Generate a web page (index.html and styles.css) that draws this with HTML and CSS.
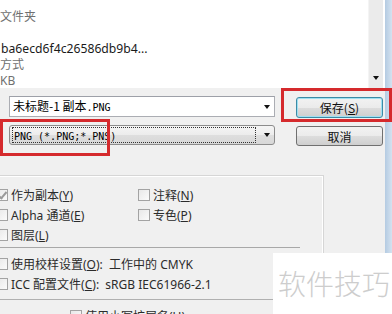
FILE: index.html
```html
<!DOCTYPE html>
<html lang="zh-CN">
<head>
    <meta charset="UTF-8">
    <title>存储为</title>
    <link rel="stylesheet" href="styles.css">
</head>
<body>
    <div class="window">
        <div class="dialog">
            <!-- 文件列表 -->
            <div class="file-list">
                <div class="list-items">
                    <div class="list-line muted">文件夹</div>
                    <div class="list-line name">ba6ecd6f4c26586db9b4...</div>
                    <div class="list-line muted">方式</div>
                    <div class="list-line muted">KB</div>
                </div>
                <div class="scrollbar"><span class="arrow-down"></span></div>
            </div>

            <!-- 文件名 / 格式 -->
            <div class="save-rows">
                <div class="combo combo-edit">
                    <span class="combo-text">未标题-1 副本<span class="mono">.PNG</span></span>
                    <span class="arrow-down"></span>
                </div>
                <button class="btn btn-default">保存(<u>S</u>)</button>
                <div class="combo combo-list">
                    <span class="combo-text focus"><span class="mono">PNG (*.PNG;*.PNS)</span></span>
                    <span class="arrow-down"></span>
                </div>
                <button class="btn btn-cancel">取消</button>
            </div>

            <!-- 存储选项 -->
            <div class="options">
                <div class="check-grid">
                    <label class="check"><span class="box checked"></span>作为副本(<u>Y</u>)</label>
                    <label class="check"><span class="box"></span>注释(<u>N</u>)</label>
                    <label class="check"><span class="box"></span>Alpha 通道(<u>E</u>)</label>
                    <label class="check"><span class="box"></span>专色(<u>P</u>)</label>
                    <label class="check"><span class="box"></span>图层(<u>L</u>)</label>
                </div>
                <div class="sep"></div>
                <div class="color-rows">
                    <label class="check"><span class="box"></span>使用校样设置(<u>O</u>):&nbsp;&nbsp;工作中的 CMYK</label>
                    <label class="check"><span class="box"></span>ICC 配置文件(<u>C</u>):&nbsp;&nbsp;sRGB IEC61966-2.1</label>
                </div>
                <div class="sep sep-bottom"></div>
                <label class="check check-last"><span class="box"></span>使用小写扩展名(<u>U</u>)</label>
            </div>
        </div>
        <div class="frame"></div>
    </div>

    <!-- 标注框 -->
    <div class="mark mark-save"></div>
    <div class="mark mark-format"></div>

    <div class="watermark">软件技巧</div>
</body>
</html>
```

FILE: styles.css
```css
/* 基础重置 */
* {
    margin: 0;
    padding: 0;
    box-sizing: border-box;
}

html, body {
    width: 100%;
    height: 100%;
    overflow: hidden;
}

body {
    font-family: "Noto Sans", "Noto Sans CJK SC", sans-serif;
    font-size: 12px;
    color: #222;
    background: #f0f0f0;
    position: relative;
}

.window {
    display: flex;
    height: 100%;
}

.dialog {
    width: 385px;
    display: flex;
    flex-direction: column;
}

/* 窗口右边框 */
.frame {
    width: 7px;
    background: linear-gradient(to right, #b4cbe2, #d4e2f0);
}

/* 文件列表 */
.file-list {
    height: 88px;
    flex: none;
    background: #fff;
    display: flex;
}

.list-items {
    flex: 1;
    padding-top: 9px;
}

.list-line {
    height: 16px;
    line-height: 16px;
    white-space: nowrap;
}

.list-line.name {
    margin-top: 16px;
    color: #1a1a1a;
    padding-left: 1px;
    font-size: 12.2px;
}

.muted {
    color: #707070;
}

.scrollbar {
    width: 15px;
    margin-right: 2px;
    background: #ebebeb;
    border-left: 1px solid #f4f4f4;
    display: flex;
    justify-content: center;
    align-items: flex-end;
    padding-bottom: 8px;
}

.arrow-down {
    width: 0;
    height: 0;
    border-left: 3.5px solid transparent;
    border-right: 3.5px solid transparent;
    border-top: 4px solid #111;
}

/* 文件名和格式 */
.save-rows {
    margin-top: 8px;
    padding-left: 9px;
    display: grid;
    grid-template-columns: 266px 87px;
    column-gap: 21px;
    row-gap: 7px;
}

.combo {
    display: flex;
    align-items: center;
    padding-right: 4px;
}

.combo-edit {
    height: 21px;
    background: #fff;
    border: 1px solid #abadb3;
    border-top-color: #9da0a8;
    padding-left: 3px;
}

.combo-list {
    height: 20px;
    border: 1px solid #8c8c8c;
    border-radius: 3px;
    background: linear-gradient(#f5f5f5 0%, #ececec 50%, #dedede 51%, #d8d8d8 100%);
    padding-left: 2px;
}

.combo-text {
    font-family: "Noto Sans CJK SC", sans-serif;
    font-size: 12px;
    line-height: 16px;
    color: #000;
    white-space: nowrap;
}

.combo .arrow-down {
    margin-left: auto;
}

.focus {
    flex: none;
    width: 244px;
    height: 16px;
    border: 1px dotted #333;
    padding-left: 1px;
    line-height: 14px;
}

.mono {
    font-family: "DejaVu Sans Mono", monospace;
    font-size: 10px;
}

.btn {
    font-family: "Noto Sans CJK SC", sans-serif;
    font-size: 12px;
    color: #111;
    border: 1px solid #707070;
    border-radius: 3px;
    background: linear-gradient(#f2f2f2 0%, #ebebeb 50%, #dddddd 51%, #cfcfcf 100%);
    margin-top: 1px;
}

.btn-default {
    height: 21px;
    border-color: #3c8ba6;
    box-shadow: inset 0 0 0 1px #9fe0f2;
}

.btn-cancel {
    height: 20px;
}

/* 存储选项分组 */
.options {
    margin-top: 29px;
    margin-left: -12px;
    width: 336px;
    padding-left: 8px;
    padding-top: 9px;
    border-top: 1px solid #d6d6d6;
    border-right: 1px solid #d6d6d6;
    box-shadow: inset 0 1px 0 #fff, inset -1px 0 0 #fff;
    color: #2b2b2b;
}

.check-grid {
    display: grid;
    grid-template-columns: 142px 1fr;
    grid-auto-rows: 20px;
}

.check {
    display: flex;
    align-items: center;
    height: 20px;
    white-space: nowrap;
}

.box {
    width: 12px;
    height: 12px;
    border: 1px solid #a3a3a3;
    background: linear-gradient(135deg, #e8e8e8, #fbfbfb);
    margin-right: 3px;
    flex: none;
    position: relative;
}

.box.checked::after {
    content: "";
    position: absolute;
    left: 3px;
    top: 0;
    width: 3px;
    height: 7px;
    border-right: 2px solid #9a9a9a;
    border-bottom: 2px solid #9a9a9a;
    transform: rotate(40deg);
}

.sep {
    margin-top: 2px;
    width: 304px;
    height: 1px;
    background: #a8a8a8;
}

.color-rows {
    margin-top: 6px;
}

.sep-bottom {
    margin-top: 5px;
    background: #b0b0b0;
}

.check-last {
    margin-top: 6px;
    margin-left: 74px;
}

/* 红色标注框 */
.mark {
    position: absolute;
    border: 3px solid #d52a2d;
}

.mark-save {
    left: 281px;
    top: 88px;
    width: 111px;
    height: 34px;
}

.mark-format {
    left: 0;
    top: 119px;
    width: 110px;
    height: 37px;
}

/* 水印 */
.watermark {
    position: absolute;
    left: 273px;
    top: 253px;
    width: 119px;
    height: 61px;
    background: #fff;
    padding: 16px 0 0 5px;
    font-family: "Noto Sans CJK SC", sans-serif;
    font-size: 28px;
    font-weight: 300;
    line-height: 28px;
    color: #cdcdcd;
    white-space: nowrap;
}
```
